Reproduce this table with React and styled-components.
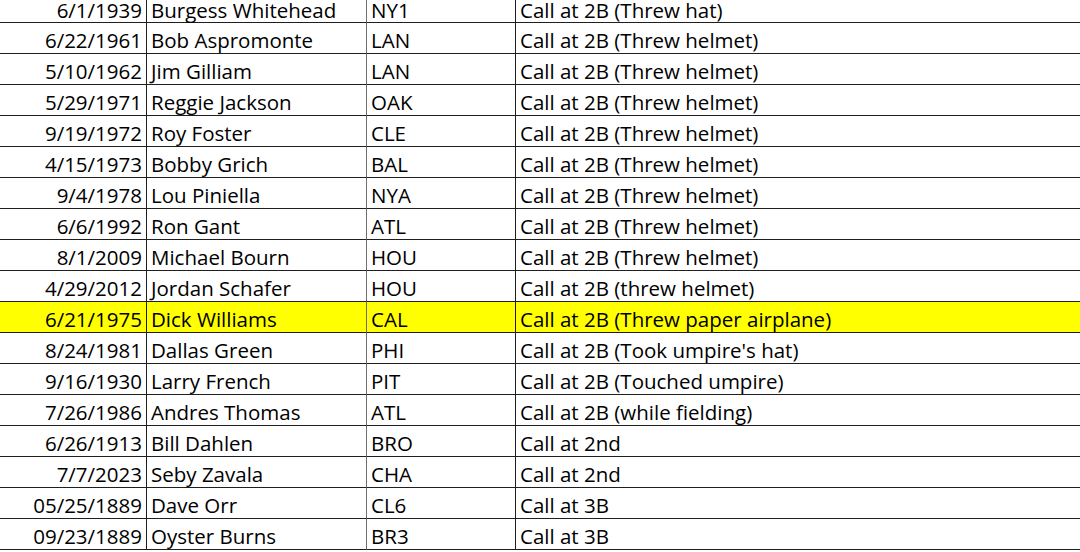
import React from "react";
import styled, { createGlobalStyle } from "styled-components";

const GlobalStyle = createGlobalStyle`
  html, body {
    margin: 0;
    padding: 0;
    background: #ffffff;
    overflow: hidden;
  }
  body {
    font-family: "Open Sans", "Noto Sans", sans-serif;
  }
`;

const Sheet = styled.div`
  width: 1080px;
  height: 552px;
  overflow: hidden;
`;

const Grid = styled.div`
  display: grid;
  grid-template-columns: 147px 220px 149px 1fr;
`;

const Row = styled.div`
  display: contents;
`;

// first row is scrolled partly off the top of the sheet
const Cell = styled.div`
  box-sizing: border-box;
  height: ${(p) => (p.$cut ? "23px" : "31px")};
  padding: ${(p) => (p.$cut ? "0" : "3.5px")} ${(p) => (p.$right ? "4px" : "0")} 0
    ${(p) => (p.$right ? "0" : "4px")};
  font-size: 20.5px;
  line-height: ${(p) => (p.$cut ? "20px" : "27px")};
  color: #000000;
  white-space: nowrap;
  text-align: ${(p) => (p.$right ? "right" : "left")};
  background: ${(p) => (p.$highlight ? "#ffff00" : "#ffffff")};
  border-bottom: 1px solid #1f1f1f;
  border-right: ${(p) => (p.$last ? "none" : `1px solid ${p.$soft ? "#6e6e6e" : "#1f1f1f"}`)};
`;

const rows = [
  ["6/1/1939", "Burgess Whitehead", "NY1", "Call at 2B (Threw hat)"],
  ["6/22/1961", "Bob Aspromonte", "LAN", "Call at 2B (Threw helmet)"],
  ["5/10/1962", "Jim Gilliam", "LAN", "Call at 2B (Threw helmet)"],
  ["5/29/1971", "Reggie Jackson", "OAK", "Call at 2B (Threw helmet)"],
  ["9/19/1972", "Roy Foster", "CLE", "Call at 2B (Threw helmet)"],
  ["4/15/1973", "Bobby Grich", "BAL", "Call at 2B (Threw helmet)"],
  ["9/4/1978", "Lou Piniella", "NYA", "Call at 2B (Threw helmet)"],
  ["6/6/1992", "Ron Gant", "ATL", "Call at 2B (Threw helmet)"],
  ["8/1/2009", "Michael Bourn", "HOU", "Call at 2B (Threw helmet)"],
  ["4/29/2012", "Jordan Schafer", "HOU", "Call at 2B (threw helmet)"],
  ["6/21/1975", "Dick Williams", "CAL", "Call at 2B (Threw paper airplane)", true],
  ["8/24/1981", "Dallas Green", "PHI", "Call at 2B (Took umpire's hat)"],
  ["9/16/1930", "Larry French", "PIT", "Call at 2B (Touched umpire)"],
  ["7/26/1986", "Andres Thomas", "ATL", "Call at 2B (while fielding)"],
  ["6/26/1913", "Bill Dahlen", "BRO", "Call at 2nd"],
  ["7/7/2023", "Seby Zavala", "CHA", "Call at 2nd"],
  ["05/25/1889", "Dave Orr", "CL6", "Call at 3B"],
  ["09/23/1889", "Oyster Burns", "BR3", "Call at 3B"],
];

export default function App() {
  return (
    <>
      <GlobalStyle />
      <Sheet>
        <Grid>
          {rows.map(([date, name, team, call, hl], i) => (
            <Row key={i}>
              <Cell $cut={i === 0} $right $highlight={hl}>{date}</Cell>
              <Cell $cut={i === 0} $soft $highlight={hl}>{name}</Cell>
              <Cell $cut={i === 0} $highlight={hl}>{team}</Cell>
              <Cell $cut={i === 0} $highlight={hl} $last>{call}</Cell>
            </Row>
          ))}
        </Grid>
      </Sheet>
    </>
  );
}
